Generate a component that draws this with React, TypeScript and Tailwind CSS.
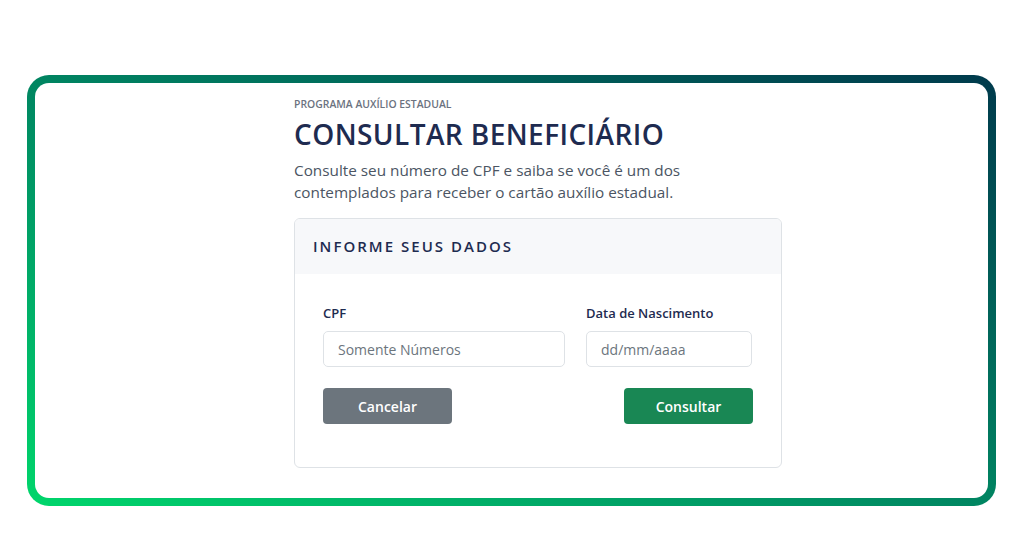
import React from "react";

export default function App() {
  return (
    <div
      className="w-[1024px] h-[536px] bg-white pt-[75px] pl-[27px] pr-[28px] pb-[30px]"
      style={{ fontFamily: '"Open Sans", "Noto Sans", sans-serif' }}
    >
      <div className="h-full rounded-[22px] p-[8px] bg-gradient-to-tr from-[#00d66b] to-[#003a4c]">
        <div className="h-full rounded-[14px] bg-white pl-[259px] pt-[14px]">
          <div className="w-[488px] flex flex-col">
            <div className="text-[10.4px] leading-[14px] text-[#6b7280] font-semibold">
              PROGRAMA AUXÍLIO ESTADUAL
            </div>
            <h1 className="mt-[5px] text-[28px] leading-[36px] font-semibold tracking-[0.015em] text-[#1e2b50]">
              CONSULTAR BENEFICIÁRIO
            </h1>
            <p className="mt-[7px] text-[15.3px] leading-[22px] text-[#4b5563] w-[410px]">
              Consulte seu número de CPF e saiba se você é um dos contemplados para receber o cartão auxílio estadual.
            </p>
            <div className="mt-[15px] border border-[#dee2e6] rounded-[6px] overflow-hidden">
              <div className="h-[55px] bg-[#f7f8fa] flex items-center pl-[18px]">
                <span className="text-[15px] font-semibold tracking-[0.135em] text-[#1e2b50]">
                  INFORME SEUS DADOS
                </span>
              </div>
              <div className="px-[28px] pt-[30px] pb-[43px]">
                <div className="flex gap-[21px]">
                  <div className="flex flex-col w-[242px]">
                    <label className="text-[13px] leading-[18px] font-semibold text-[#1e2b50]">CPF</label>
                    <div className="mt-[9px] h-[36px] border border-[#dee2e6] rounded-[5px] flex items-center px-[14px] text-[14px] text-[#6c757d]">
                      Somente Números
                    </div>
                  </div>
                  <div className="flex flex-col w-[166px]">
                    <label className="text-[13px] leading-[18px] font-semibold text-[#1e2b50]">Data de Nascimento</label>
                    <div className="mt-[9px] h-[36px] border border-[#dee2e6] rounded-[5px] flex items-center px-[14px] text-[14px] text-[#6c757d]">
                      dd/mm/aaaa
                    </div>
                  </div>
                </div>
                <div className="mt-[21px] flex justify-between">
                  <button className="w-[129px] h-[36px] rounded-[4px] bg-[#6c757d] text-white text-[14px] font-semibold">
                    Cancelar
                  </button>
                  <button className="w-[129px] h-[36px] rounded-[4px] bg-[#198754] text-white text-[14px] font-semibold">
                    Consultar
                  </button>
                </div>
              </div>
            </div>
          </div>
        </div>
      </div>
    </div>
  );
}
